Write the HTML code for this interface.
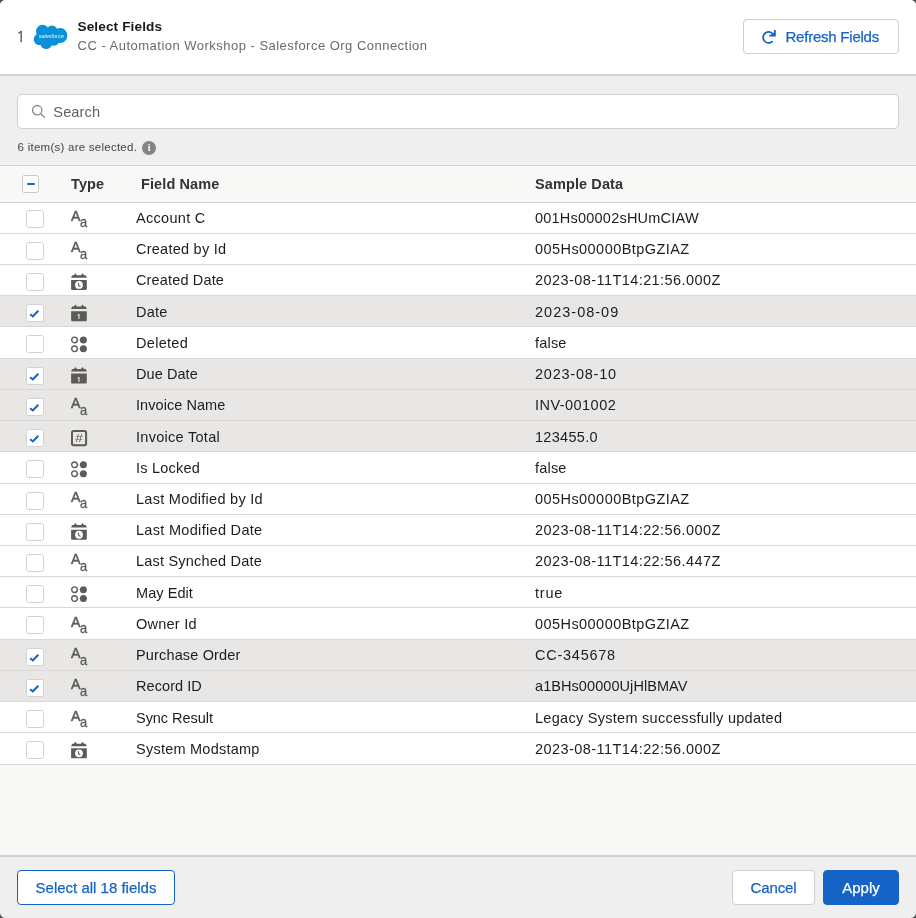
<!DOCTYPE html>
<html lang="en">
<head>
<meta charset="utf-8">
<title>Select Fields</title>
<style>
*{box-sizing:border-box;margin:0;padding:0}
html,body{width:916px;height:918px;overflow:hidden;background:#4a4a4a}
body{font-family:"Liberation Sans",sans-serif;color:#1d1d1d;font-size:14px}
.modal{will-change:transform;position:absolute;left:0;top:0;width:916px;height:918px;background:#efefef;border-radius:5.5px;overflow:hidden}
.hdr{position:absolute;left:0;top:0;width:916px;height:76px;background:#fff;border-bottom:2px solid #d3d2d1}
.step{position:absolute;left:16.3px;top:27px;font-size:15px;color:#555;line-height:20px;font-family:"NanumGothic","Liberation Sans",sans-serif;-webkit-text-stroke:.3px #555}
.logo{position:absolute;left:33px;top:19px}
.title{position:absolute;left:77.5px;top:17.5px;font-size:13.6px;font-weight:bold;line-height:18px;color:#1a1a1a;white-space:nowrap;letter-spacing:.12px}
.sub{position:absolute;left:77.6px;top:37.2px;font-size:13px;line-height:18px;color:#6a6a6a;white-space:nowrap;letter-spacing:.48px}
.btn{-webkit-text-stroke:.25px currentColor;position:absolute;border-radius:4px;font-size:15px;line-height:18px;white-space:nowrap;display:flex;align-items:center;justify-content:center}
.refresh{left:743px;top:19px;width:156px;height:35px;background:#fff;border:1px solid #d0cfce;color:#1663c7}
.refresh{justify-content:flex-start}.refresh svg{position:absolute;left:17px;top:9px}.refresh span{position:absolute;left:41.5px;top:7.5px;letter-spacing:-.23px}
.search{position:absolute;left:17px;top:94px;width:882px;height:35px;background:#fff;border:1px solid #d0cfce;border-radius:5px}
.search svg{position:absolute;left:12.5px;top:9.4px}
.search span{position:absolute;left:35.3px;top:8px;font-size:14.6px;line-height:18px;color:#626262;letter-spacing:.1px}
.cnt{position:absolute;left:17.6px;top:139px;font-size:11.5px;line-height:16px;color:#444;white-space:nowrap;letter-spacing:.25px}
.info{position:absolute;left:142px;top:141px;width:14px;height:14px;border-radius:50%;background:#848484;color:#fff;font-size:9.5px;line-height:14px;text-align:center;font-weight:bold;font-family:"Liberation Serif",serif}
.table{position:absolute;left:0;top:165px;width:916px;height:692px;background:#f8f8f7;border-top:1px solid #d5d4d2;border-bottom:2px solid #d3d2d1}
.th{position:relative;height:37px;border-bottom:1px solid #d0cfce;font-weight:bold;font-size:14.5px;color:#333}
.th span{position:absolute;top:9px;line-height:18px;white-space:nowrap;letter-spacing:.1px}
.th .cbh{position:absolute;left:22px;top:9px;width:17px;height:18px;background:#fff;border:1px solid #c9c8c7;border-radius:2.5px}
.th .cbh i{position:absolute;left:4px;top:7px;width:8px;height:2px;background:#1663c7;border-radius:1px}
.row{position:absolute;left:0;width:916px;background:#fff;border-bottom:1px solid #d9d8d7;font-size:14.5px}
.row.sel{background:#e8e7e6}
.row span{position:absolute;white-space:nowrap}
.cb{left:26px;top:8px;width:17.5px;height:17.5px;background:#fff;border:1px solid #d3d2d1;border-radius:2.5px}
.cb svg{position:absolute;left:-1px;top:-1px}
.ti{left:70px;top:0;height:31px;width:20px}
.ti svg{position:absolute;left:0;top:0}
.ti b{position:absolute;font-weight:normal;color:#5c5b57;line-height:16px;-webkit-text-stroke:.3px #5c5b57}
.ti .A{left:1px;top:5.2px;font-size:14.2px;-webkit-text-stroke-width:.5px}
.ti .a{left:10.1px;top:9.2px;font-size:14.6px;transform:scaleX(.88);transform-origin:0 0}
.g{fill:#5c5b58;font-family:"Liberation Sans",sans-serif}
.nm{left:136px;top:6px;line-height:18px;letter-spacing:.3px}
.sd{left:535px;top:6px;line-height:18px;letter-spacing:.3px}
.ftr{position:absolute;left:0;top:857px;width:916px;height:61px}
.selall{left:17px;top:13px;width:158px;height:35px;background:#fff;border:1px solid #1663c7;color:#1663c7}
.cancel{left:732px;top:13px;width:83px;letter-spacing:-.15px;height:35px;background:#fff;border:1px solid #d0cfce;color:#1663c7}
.apply{left:823px;top:13px;width:76px;height:35px;background:#1663c7;border:1px solid #1663c7;color:#fff}
</style>
</head>
<body>
<div class="modal">
<div class="hdr">
<div class="step">1</div>
<svg class="logo" width="36" height="34" viewBox="0 0 36 34"><path transform="translate(0.8,0.6) scale(1.396,1.44)" fill="#0a90d9" d="M10.006 5.415a4.195 4.195 0 013.045-1.306c1.56 0 2.954.9 3.69 2.205.63-.3 1.35-.45 2.1-.45 2.85 0 5.159 2.34 5.159 5.22s-2.31 5.22-5.176 5.22c-.345 0-.69-.044-1.02-.104a3.75 3.75 0 01-3.3 1.95c-.6 0-1.155-.15-1.65-.375A4.314 4.314 0 018.88 20.4a4.302 4.302 0 01-4.05-2.82c-.27.062-.54.076-.825.076-2.204 0-4.005-1.8-4.005-4.05 0-1.5.81-2.82 2.01-3.51-.255-.57-.39-1.2-.39-1.845 0-2.58 2.1-4.65 4.65-4.65 1.53 0 2.85.705 3.72 1.8"/><text x="18.2" y="18.9" font-size="5.6" font-style="italic" fill="#fff" fill-opacity=".92" text-anchor="middle" font-family="Liberation Sans, sans-serif" textLength="25" lengthAdjust="spacingAndGlyphs">salesforce</text></svg>
<div class="title">Select Fields</div>
<div class="sub">CC - Automation Workshop - Salesforce Org Connection</div>
<div class="btn refresh"><svg width="17" height="17" viewBox="0 0 17 17"><path d="M11.14 12.61A5.5 5.5 0 1 1 11.75 4.79" fill="none" stroke="#1663c7" stroke-width="1.75" stroke-linecap="round"/><path d="M12.9 1.1h1.9v6.5h-6.5v-1.8l2.2-.2 2.4-2.1z" fill="#1663c7"/></svg><span>Refresh Fields</span></div>
</div>
<div class="search"><svg width="16" height="16" viewBox="0 0 16 16"><circle cx="6.2" cy="6.2" r="4.7" fill="none" stroke="#8a8886" stroke-width="1.3"/><path d="M9.7 9.7l4.1 4.1" stroke="#8a8886" stroke-width="1.3"/></svg><span>Search</span></div>
<div class="cnt">6 item(s) are selected.</div>
<div class="info">i</div>
<div class="table">
<div class="th"><div class="cbh"><i></i></div><span style="left:71px">Type</span><span style="left:141px">Field Name</span><span style="left:535px">Sample Data</span></div>
<div class="row" style="top:37px;height:31px"><span class="cb" style="top:7px"></span><span class="ti"><b class="A" style="top:5.00px">A</b><b class="a" style="top:11.40px">a</b></span><span class="nm" style="top:6px;letter-spacing:0.30px">Account C</span><span class="sd" style="top:6px;letter-spacing:0.22px">001Hs00002sHUmCIAW</span></div>
<div class="row" style="top:68px;height:31px"><span class="cb" style="top:8px"></span><span class="ti"><b class="A" style="top:5.22px">A</b><b class="a" style="top:11.62px">a</b></span><span class="nm" style="top:6px;letter-spacing:0.25px">Created by Id</span><span class="sd" style="top:6px;letter-spacing:0.44px">005Hs00000BtpGZIAZ</span></div>
<div class="row" style="top:99px;height:31px"><span class="cb" style="top:8px"></span><span class="ti"><svg width="18" height="32" viewBox="0 0 18 32"><g transform="translate(0,-0.05)"><path d="M1 12.8L2.2 10.3H3.9L5.4 8.3L6.9 10.3H11L12.5 8.3L14 10.3H15.7L16.9 12.8z" fill="#5c5b57"/><path d="M1.1 15h15.7v8.8q0 1.2-1.2 1.2H2.3q-1.2 0-1.2-1.2z" fill="#5c5b57"/><circle cx="9" cy="20" r="3.9" fill="#fff"/><path d="M8.5 17.9v2.2l1.9 1.7" stroke="#5c5b57" stroke-width="1.1" fill="none"/></g></svg></span><span class="nm" style="top:6px;letter-spacing:0.15px">Created Date</span><span class="sd" style="top:6px;letter-spacing:0.43px">2023-08-11T14:21:56.000Z</span></div>
<div class="row sel" style="top:130px;height:31px"><span class="cb on" style="top:8px"><svg width="18" height="18" viewBox="0 0 18 18"><path d="M4.1 10.2L6.9 12.5L12.3 6.7" fill="none" stroke="#1663c7" stroke-width="2"/></svg></span><span class="ti"><svg width="18" height="32" viewBox="0 0 18 32"><g transform="translate(0,0.18)"><path d="M1 12.8L2.2 10.3H3.9L5.4 8.3L6.9 10.3H11L12.5 8.3L14 10.3H15.7L16.9 12.8z" fill="#5c5b57"/><path d="M1.1 15h15.7v8.8q0 1.2-1.2 1.2H2.3q-1.2 0-1.2-1.2z" fill="#5c5b57"/><text x="8.9" y="23.2" font-size="7.6" font-weight="bold" fill="#fff" text-anchor="middle" font-family="NanumGothic, Liberation Sans, sans-serif">1</text></g></svg></span><span class="nm" style="top:7px;letter-spacing:0.23px">Date</span><span class="sd" style="top:7px;letter-spacing:1.01px">2023-08-09</span></div>
<div class="row" style="top:161px;height:32px"><span class="cb" style="top:8px"></span><span class="ti"><svg width="18" height="32" viewBox="0 0 18 32"><g transform="translate(0,0.40)"><circle cx="4.5" cy="12.5" r="2.8" fill="#fff" stroke="#5c5b57" stroke-width="1.4"/><circle cx="13.4" cy="12.5" r="3.5" fill="#5c5b57"/><circle cx="4.5" cy="21.4" r="2.8" fill="#fff" stroke="#5c5b57" stroke-width="1.4"/><circle cx="13.4" cy="21.4" r="3.5" fill="#5c5b57"/><path d="M8 12.5h2M8 21.4h2" stroke="#5c5b57" stroke-width=".5" opacity=".5"/></g></svg></span><span class="nm" style="top:7px;letter-spacing:0.30px">Deleted</span><span class="sd" style="top:7px;letter-spacing:0.20px">false</span></div>
<div class="row sel" style="top:193px;height:31px"><span class="cb on" style="top:8px"><svg width="18" height="18" viewBox="0 0 18 18"><path d="M4.1 10.2L6.9 12.5L12.3 6.7" fill="none" stroke="#1663c7" stroke-width="2"/></svg></span><span class="ti"><svg width="18" height="32" viewBox="0 0 18 32"><g transform="translate(0,-0.38)"><path d="M1 12.8L2.2 10.3H3.9L5.4 8.3L6.9 10.3H11L12.5 8.3L14 10.3H15.7L16.9 12.8z" fill="#5c5b57"/><path d="M1.1 15h15.7v8.8q0 1.2-1.2 1.2H2.3q-1.2 0-1.2-1.2z" fill="#5c5b57"/><text x="8.9" y="23.2" font-size="7.6" font-weight="bold" fill="#fff" text-anchor="middle" font-family="NanumGothic, Liberation Sans, sans-serif">1</text></g></svg></span><span class="nm" style="top:6px;letter-spacing:0.07px">Due Date</span><span class="sd" style="top:6px;letter-spacing:0.77px">2023-08-10</span></div>
<div class="row sel" style="top:224px;height:31px"><span class="cb on" style="top:8px"><svg width="18" height="18" viewBox="0 0 18 18"><path d="M4.1 10.2L6.9 12.5L12.3 6.7" fill="none" stroke="#1663c7" stroke-width="2"/></svg></span><span class="ti"><b class="A" style="top:5.35px">A</b><b class="a" style="top:11.75px">a</b></span><span class="nm" style="top:6px;letter-spacing:0.06px">Invoice Name</span><span class="sd" style="top:6px;letter-spacing:0.46px">INV-001002</span></div>
<div class="row sel" style="top:255px;height:31px"><span class="cb on" style="top:8px"><svg width="18" height="18" viewBox="0 0 18 18"><path d="M4.1 10.2L6.9 12.5L12.3 6.7" fill="none" stroke="#1663c7" stroke-width="2"/></svg></span><span class="ti"><svg width="18" height="32" viewBox="0 0 18 32"><g transform="translate(0,0.08)"><rect x="2" y="10" width="14.1" height="14.1" rx="1.6" fill="none" stroke="#5c5b57" stroke-width="2"/><text x="9" y="21" font-size="10.8" fill="#5c5b57" text-anchor="middle" font-family="Liberation Sans, sans-serif" textLength="7.6" lengthAdjust="spacingAndGlyphs">#</text></g></svg></span><span class="nm" style="top:7px;letter-spacing:0.28px">Invoice Total</span><span class="sd" style="top:7px;letter-spacing:0.30px">123455.0</span></div>
<div class="row" style="top:286px;height:32px"><span class="cb" style="top:8px"></span><span class="ti"><svg width="18" height="32" viewBox="0 0 18 32"><g transform="translate(0,0.30)"><circle cx="4.5" cy="12.5" r="2.8" fill="#fff" stroke="#5c5b57" stroke-width="1.4"/><circle cx="13.4" cy="12.5" r="3.5" fill="#5c5b57"/><circle cx="4.5" cy="21.4" r="2.8" fill="#fff" stroke="#5c5b57" stroke-width="1.4"/><circle cx="13.4" cy="21.4" r="3.5" fill="#5c5b57"/><path d="M8 12.5h2M8 21.4h2" stroke="#5c5b57" stroke-width=".5" opacity=".5"/></g></svg></span><span class="nm" style="top:7px;letter-spacing:0.22px">Is Locked</span><span class="sd" style="top:7px;letter-spacing:0.20px">false</span></div>
<div class="row" style="top:318px;height:31px"><span class="cb" style="top:8px"></span><span class="ti"><b class="A" style="top:5.03px">A</b><b class="a" style="top:11.43px">a</b></span><span class="nm" style="top:6px;letter-spacing:0.27px">Last Modified by Id</span><span class="sd" style="top:6px;letter-spacing:0.44px">005Hs00000BtpGZIAZ</span></div>
<div class="row" style="top:349px;height:31px"><span class="cb" style="top:8px"></span><span class="ti"><svg width="18" height="32" viewBox="0 0 18 32"><g transform="translate(0,-0.25)"><path d="M1 12.8L2.2 10.3H3.9L5.4 8.3L6.9 10.3H11L12.5 8.3L14 10.3H15.7L16.9 12.8z" fill="#5c5b57"/><path d="M1.1 15h15.7v8.8q0 1.2-1.2 1.2H2.3q-1.2 0-1.2-1.2z" fill="#5c5b57"/><circle cx="9" cy="20" r="3.9" fill="#fff"/><path d="M8.5 17.9v2.2l1.9 1.7" stroke="#5c5b57" stroke-width="1.1" fill="none"/></g></svg></span><span class="nm" style="top:6px;letter-spacing:0.31px">Last Modified Date</span><span class="sd" style="top:6px;letter-spacing:0.43px">2023-08-11T14:22:56.000Z</span></div>
<div class="row" style="top:380px;height:31px"><span class="cb" style="top:8px"></span><span class="ti"><b class="A" style="top:5.48px">A</b><b class="a" style="top:11.88px">a</b></span><span class="nm" style="top:6px;letter-spacing:0.20px">Last Synched Date</span><span class="sd" style="top:6px;letter-spacing:0.43px">2023-08-11T14:22:56.447Z</span></div>
<div class="row" style="top:411px;height:31px"><span class="cb" style="top:8px"></span><span class="ti"><svg width="18" height="32" viewBox="0 0 18 32"><g transform="translate(0,0.20)"><circle cx="4.5" cy="12.5" r="2.8" fill="#fff" stroke="#5c5b57" stroke-width="1.4"/><circle cx="13.4" cy="12.5" r="3.5" fill="#5c5b57"/><circle cx="4.5" cy="21.4" r="2.8" fill="#fff" stroke="#5c5b57" stroke-width="1.4"/><circle cx="13.4" cy="21.4" r="3.5" fill="#5c5b57"/><path d="M8 12.5h2M8 21.4h2" stroke="#5c5b57" stroke-width=".5" opacity=".5"/></g></svg></span><span class="nm" style="top:7px;letter-spacing:0.07px">May Edit</span><span class="sd" style="top:7px;letter-spacing:0.77px">true</span></div>
<div class="row" style="top:442px;height:32px"><span class="cb" style="top:8px"></span><span class="ti"><b class="A" style="top:5.92px">A</b><b class="a" style="top:12.32px">a</b></span><span class="nm" style="top:7px;letter-spacing:0.24px">Owner Id</span><span class="sd" style="top:7px;letter-spacing:0.44px">005Hs00000BtpGZIAZ</span></div>
<div class="row sel" style="top:474px;height:31px"><span class="cb on" style="top:8px"><svg width="18" height="18" viewBox="0 0 18 18"><path d="M4.1 10.2L6.9 12.5L12.3 6.7" fill="none" stroke="#1663c7" stroke-width="2"/></svg></span><span class="ti"><b class="A" style="top:5.15px">A</b><b class="a" style="top:11.55px">a</b></span><span class="nm" style="top:6px;letter-spacing:0.15px">Purchase Order</span><span class="sd" style="top:6px;letter-spacing:0.75px">CC-345678</span></div>
<div class="row sel" style="top:505px;height:31px"><span class="cb on" style="top:8px"><svg width="18" height="18" viewBox="0 0 18 18"><path d="M4.1 10.2L6.9 12.5L12.3 6.7" fill="none" stroke="#1663c7" stroke-width="2"/></svg></span><span class="ti"><b class="A" style="top:5.38px">A</b><b class="a" style="top:11.78px">a</b></span><span class="nm" style="top:6px;letter-spacing:0.07px">Record ID</span><span class="sd" style="top:6px;letter-spacing:0.07px">a1BHs00000UjHlBMAV</span></div>
<div class="row" style="top:536px;height:31px"><span class="cb" style="top:8px"></span><span class="ti"><b class="A" style="top:5.60px">A</b><b class="a" style="top:12.00px">a</b></span><span class="nm" style="top:7px;letter-spacing:-0.04px">Sync Result</span><span class="sd" style="top:7px;letter-spacing:0.28px">Legacy System successfully updated</span></div>
<div class="row" style="top:567px;height:32px"><span class="cb" style="top:8px"></span><span class="ti"><svg width="18" height="32" viewBox="0 0 18 32"><g transform="translate(0,0.33)"><path d="M1 12.8L2.2 10.3H3.9L5.4 8.3L6.9 10.3H11L12.5 8.3L14 10.3H15.7L16.9 12.8z" fill="#5c5b57"/><path d="M1.1 15h15.7v8.8q0 1.2-1.2 1.2H2.3q-1.2 0-1.2-1.2z" fill="#5c5b57"/><circle cx="9" cy="20" r="3.9" fill="#fff"/><path d="M8.5 17.9v2.2l1.9 1.7" stroke="#5c5b57" stroke-width="1.1" fill="none"/></g></svg></span><span class="nm" style="top:7px;letter-spacing:0.24px">System Modstamp</span><span class="sd" style="top:7px;letter-spacing:0.43px">2023-08-11T14:22:56.000Z</span></div></div>
<div class="ftr">
<div class="btn selall">Select all 18 fields</div>
<div class="btn cancel">Cancel</div>
<div class="btn apply">Apply</div>
</div>
</div>
</body>
</html>
